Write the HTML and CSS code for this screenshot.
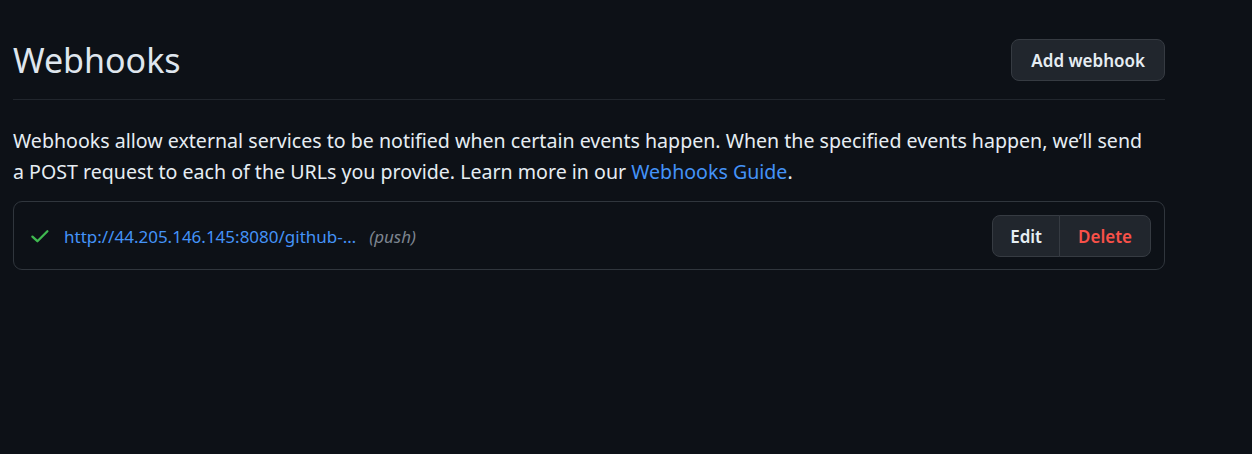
FILE: index.html
```html
<!DOCTYPE html>
<html>
<head>
<meta charset="utf-8">
<link rel="stylesheet" href="styles.css">
</head>
<body>
<div class="page">
  <div class="subhead">
    <h2 class="subhead-title">Webhooks</h2>
    <button class="btn">Add webhook</button>
  </div>
  <p class="desc">Webhooks allow external services to be notified when certain events happen. When the specified events happen, we’ll send a POST request to each of the URLs you provide. Learn more in our <a href="#">Webhooks Guide</a>.</p>
  <div class="hook-box">
    <div class="hook-item">
      <svg class="check" width="20" height="20" viewBox="0 0 20 20"><path d="M2.4 10.6 L7.4 15.2 L17.4 5.2" fill="none" stroke="currentColor" stroke-width="2.3" stroke-linecap="round" stroke-linejoin="round"/></svg>
      <a class="hook-url" href="#">http://44.205.146.145:8080/github-…</a>
      <em class="hook-events">(push)</em>
      <div class="btn-group">
        <button class="btn btn-group-item">Edit</button>
        <button class="btn btn-group-item btn-danger">Delete</button>
      </div>
    </div>
  </div>
</div>
</body>
</html>
```
FILE: styles.css
```css
html, body {
  margin: 0;
  background: #0d1117;
  color: #e6edf3;
  font-family: "Noto Sans", "Open Sans", sans-serif;
}
.page {
  width: 1152px;
  padding: 39px 0 0 13px;
}
.subhead {
  display: flex;
  align-items: center;
  justify-content: space-between;
  padding-bottom: 18px;
  border-bottom: 1px solid #21262d;
}
.subhead-title {
  margin: 0;
  font-size: 34px;
  font-weight: 400;
  line-height: 42px;
  color: #dfe6ee;
}
.btn {
  font-family: inherit;
  background: #21262d;
  color: #e6edf3;
  border: 1px solid #363b42;
  border-radius: 8px;
  font-size: 17px;
  font-weight: 600;
  height: 42px;
  padding: 0 19px;
  cursor: pointer;
}
.desc {
  max-width: 1136px;
  margin: 25px 0 14px;
  font-size: 19.6px;
  line-height: 31px;
}
.desc a {
  color: #4493f8;
  text-decoration: none;
}
.hook-box {
  border: 1px solid #30363d;
  border-radius: 9px;
}
.hook-item {
  display: flex;
  align-items: center;
  padding: 13px 13px 12px 16px;
}
.check {
  color: #3fb950;
  margin-right: 14px;
}
.hook-url {
  color: #4493f8;
  text-decoration: none;
  font-size: 17px;
}
.hook-events {
  color: #7d8590;
  font-size: 17px;
  margin-left: 13px;
}
.btn-group {
  display: flex;
  margin-left: auto;
}
.btn-group-item {
  border-radius: 0;
}
.btn-group-item:first-child {
  border-radius: 8px 0 0 8px;
  padding: 0 17px;
}
.btn-group-item:last-child {
  border-radius: 0 8px 8px 0;
  margin-left: -1px;
  padding: 0 18px;
}
.btn-danger {
  color: #f85149;
}
```
